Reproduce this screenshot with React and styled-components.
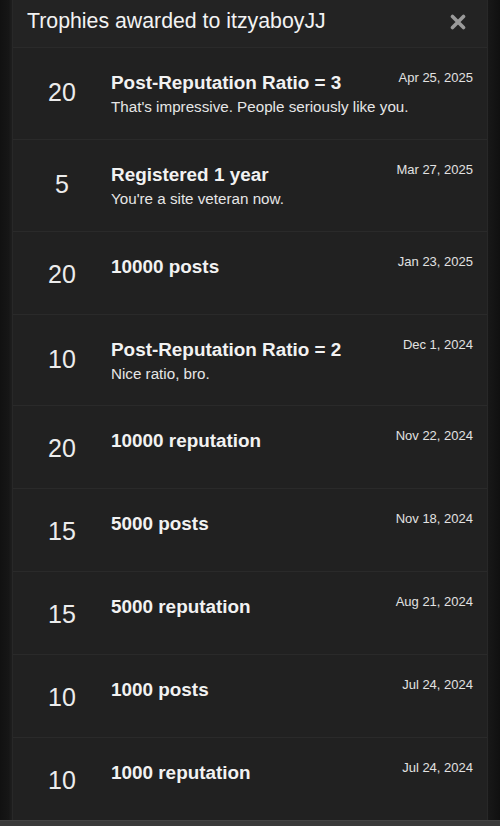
import React from "react";
import styled, { createGlobalStyle } from "styled-components";

const GlobalStyle = createGlobalStyle`
  html, body { margin: 0; padding: 0; background: #141414; }
  body { font-family: "Liberation Sans", Arial, sans-serif; overflow: hidden; }
  * { box-sizing: border-box; }
`;

const Page = styled.div`
  width: 500px;
  height: 826px;
  display: flex;
  flex-direction: column;
  background: linear-gradient(to right, #111 0px, #161616 9px, #1d1d1d 11px, #1d1d1d 12px, transparent 12px, transparent 488px, #181818 488px, #101010 500px);
`;

const Body = styled.div`
  flex: 1;
  display: flex;
  justify-content: center;
  padding: 0 12px;
  min-height: 0;
`;

const Panel = styled.div`
  flex: 1;
  background: #212121;
  border-left: 1px solid #282828;
  border-right: 1px solid #282828;
  display: flex;
  flex-direction: column;
  overflow: hidden;
`;

const Header = styled.div`
  flex: none;
  height: 48px;
  display: flex;
  align-items: center;
  justify-content: space-between;
  padding: 0 20px 4px 14px;
  background: #232323;
  border-bottom: 1px solid #2a2a2a;
`;

const Title = styled.h1`
  margin: 0;
  font-size: 21.3px;
  font-weight: 400;
  color: #f2f2f2;
`;

const Close = styled.button`
  border: 0;
  background: none;
  padding: 0;
  width: 18px;
  height: 18px;
  display: flex;
  align-items: center;
  justify-content: center;
  cursor: pointer;
`;

const List = styled.ul`
  flex: none;
  list-style: none;
  margin: 0;
  padding: 0;
`;

const Row = styled.li`
  display: flex;
  height: ${(p) => p.$h}px;
  border-bottom: 1px solid #2a2a2a;
  padding: 23px 14px 0 0;
`;

const Points = styled.div`
  width: 98px;
  flex: none;
  align-self: center;
  text-align: center;
  font-size: 25px;
  line-height: 30px;
  color: #ececec;
  margin-top: ${(p) => (p.$tall ? -26 : -21)}px;
`;

const Info = styled.div`
  flex: 1;
  display: grid;
  grid-template-columns: 1fr auto;
  align-content: start;
`;

const Name = styled.div`
  grid-column: 1;
  grid-row: 1;
  font-size: 18.9px;
  font-weight: 700;
  line-height: 24px;
  color: #f2f2f2;
`;

const DateText = styled.div`
  grid-column: 2;
  grid-row: 1;
  align-self: start;
  margin-top: -1px;
  font-size: 13px;
  line-height: 16px;
  color: #e2e2e2;
`;

const Desc = styled.div`
  grid-column: 1 / 3;
  grid-row: 2;
  margin-top: 2px;
  font-size: 15.2px;
  line-height: 20px;
  color: #e6e6e6;
`;

const Footer = styled.div`
  flex: none;
  height: 6px;
  background: #3a3a3a;
  border-top: 1px solid #444;
`;

const trophies = [
  { points: 20, name: "Post-Reputation Ratio = 3", desc: "That's impressive. People seriously like you.", date: "Apr 25, 2025", h: 92 },
  { points: 5, name: "Registered 1 year", desc: "You're a site veteran now.", date: "Mar 27, 2025", h: 92 },
  { points: 20, name: "10000 posts", date: "Jan 23, 2025", h: 83 },
  { points: 10, name: "Post-Reputation Ratio = 2", desc: "Nice ratio, bro.", date: "Dec 1, 2024", h: 91 },
  { points: 20, name: "10000 reputation", date: "Nov 22, 2024", h: 83 },
  { points: 15, name: "5000 posts", date: "Nov 18, 2024", h: 83 },
  { points: 15, name: "5000 reputation", date: "Aug 21, 2024", h: 83 },
  { points: 10, name: "1000 posts", date: "Jul 24, 2024", h: 83 },
  { points: 10, name: "1000 reputation", date: "Jul 24, 2024", h: 83 },
];

export default function App() {
  return (
    <>
      <GlobalStyle />
      <Page>
        <Body>
          <Panel>
            <Header>
              <Title>Trophies awarded to itzyaboyJJ</Title>
              <Close aria-label="Close">
                <svg width="16" height="16" viewBox="0 0 16 16">
                  <path d="M2.5 2.5 L13.5 13.5 M13.5 2.5 L2.5 13.5" stroke="#9a9a9a" strokeWidth="3.6" strokeLinecap="round" />
                </svg>
              </Close>
            </Header>
            <List>
              {trophies.map((t, i) => (
                <Row key={i} $h={t.h}>
                  <Points $tall={!!t.desc}>{t.points}</Points>
                  <Info>
                    <Name>{t.name}</Name>
                    <DateText>{t.date}</DateText>
                    {t.desc && <Desc>{t.desc}</Desc>}
                  </Info>
                </Row>
              ))}
            </List>
          </Panel>
        </Body>
        <Footer />
      </Page>
    </>
  );
}
